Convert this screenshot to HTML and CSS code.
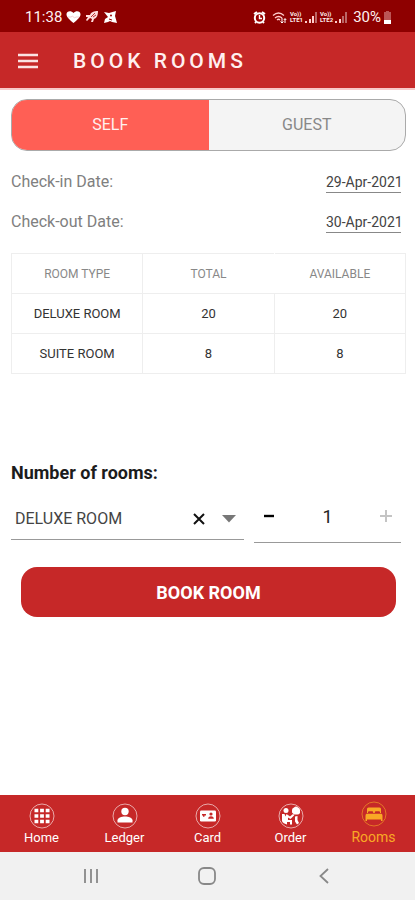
FILE: index.html
```html
<!DOCTYPE html>
<html lang="en">
<head>
<meta charset="utf-8">
<meta name="viewport" content="width=device-width, initial-scale=1">
<title>Book Rooms</title>
<link rel="stylesheet" href="styles.css">
</head>
<body>
<div class="status">
  <div class="status-group">
    <span class="clock">11:38</span>
    <svg width="15" height="14" viewBox="0 0 15 14" aria-hidden="true"><path fill="#fff" d="M7.500 13C3 9.500.5 7 .5 4.300.5 1 5 .2 7.500 3 10 .2 14.500 1 14.500 4.300 14.500 7 12 9.500 7.500 13z"/><path d="M2 7h3l1.500-1 2 2 1.500-1h3" fill="none" stroke="#ebb" stroke-width=".7"/></svg>
    <svg width="14" height="14" viewBox="0 0 14 14" aria-hidden="true"><path fill="#fdd" d="M5 5C6 2 9 1 13 1c0 4-1 7-4 8L8 12H6l1-3-2-1-3 3-1-1 2-3H1V5z"/><path d="M6 7l4-4M8 7l3-2" stroke="#b33" stroke-width="1"/></svg>
    <svg width="14" height="14" viewBox="0 0 14 14" aria-hidden="true"><path fill="#fff" d="M1 2l5 1 7-2-1 5 2 7-5-1-2-1-2 1-4 1 1-4 3-2z"/><circle cx="8" cy="5.500" r="1" fill="#900"/><path d="M6 9l3 1" stroke="#900"/></svg>
  </div>
  <div class="status-group status-right">
    <svg width="13" height="13" viewBox="0 0 13 13" aria-hidden="true"><path d="M1 3l3-2M12 3L9 1M3 11l-1 1M10 11l1 1" stroke="#fff" stroke-width="2"/><circle cx="6.500" cy="7" r="4.700" fill="#900" stroke="#fff" stroke-width="2"/><path d="M6.500 4v3.500H9" fill="none" stroke="#fff" stroke-width="1.400"/></svg>
    <svg class="wifi" width="15" height="13" viewBox="0 0 15 13" aria-hidden="true"><path d="M1 4.500q5.500-5 11 0M3 7q3.500-3 7 0M5 9q1.500-1.500 3 0" fill="none" stroke="#fcc" stroke-width="1.300"/><path d="M10 7v5M8.500 10.500L10 12l1.500-1.500M13 12V8M11.800 9L13 7.500 14.200 9" fill="none" stroke="#fff"/></svg>
    <span class="lte"><span>Vo))</span><span>LTE1</span></span>
    <svg width="13" height="12" viewBox="0 0 13 12" aria-hidden="true"><path fill="#fcc" d="M0 10h2v2H0zM4 8h2v4H4zM7 5h2v7H7z"/><path fill="#b66" d="M10 1h2v11h-2z"/></svg>
    <span class="lte"><span>Vo))</span><span>LTE2</span></span>
    <svg width="13" height="12" viewBox="0 0 13 12" aria-hidden="true"><path fill="#fcc" d="M0 10h2v2H0zM4 8h2v4H4z"/><path fill="#b66" d="M7 5h2v7H7zM10 1h2v11h-2z"/></svg>
    <span class="battery">30%</span>
    <svg width="9" height="13" viewBox="0 0 9 13" aria-hidden="true"><path fill="#b55" d="M3 0h3v1h2v8H1V1h2z"/><path fill="#fff" d="M1 9h7v4H1z"/></svg>
  </div>
</div>
<header class="appbar">
  <button class="menu" type="button" aria-label="Menu"><svg width="20" height="16" viewBox="0 0 20 16"><path d="M0 2h20M0 8h20M0 14h20" stroke="#fbe3e3" stroke-width="2.400"/></svg></button>
  <h1>BOOK ROOMS</h1>
</header>
<main>
  <div class="toggle">
    <button type="button" class="on" aria-pressed="true">SELF</button>
    <button type="button" aria-pressed="false">GUEST</button>
  </div>
  <div class="dates">
    <div class="date-row"><label for="in">Check-in Date:</label><input id="in" type="text" value="29-Apr-2021"></div>
    <div class="date-row"><label for="out">Check-out Date:</label><input id="out" type="text" value="30-Apr-2021"></div>
  </div>
  <table>
    <thead><tr><th>ROOM TYPE</th><th>TOTAL</th><th>AVAILABLE</th></tr></thead>
    <tbody>
      <tr><td>DELUXE ROOM</td><td>20</td><td>20</td></tr>
      <tr><td>SUITE ROOM</td><td>8</td><td>8</td></tr>
    </tbody>
  </table>
  <label class="rooms-label" for="type">Number of rooms:</label>
  <div class="picker">
    <div class="select">
      <select id="type"><option>DELUXE ROOM</option><option>SUITE ROOM</option></select>
      <button type="button" aria-label="Clear"><svg width="12" height="12" viewBox="0 0 12 12"><path d="M1 1l10 10M11 1L1 11" stroke="#111" stroke-width="2"/></svg></button>
      <svg class="caret" width="16" height="8" viewBox="0 0 16 8" aria-hidden="true"><path d="M1 0h14L8 7.500z" fill="#777"/></svg>
    </div>
    <div class="stepper">
      <button type="button" aria-label="Fewer rooms"><svg width="12" height="12" viewBox="0 0 12 12"><path d="M1 6h10" stroke="#000" stroke-width="2.400"/></svg></button>
      <input type="text" value="1" aria-label="Room count">
      <button type="button" aria-label="More rooms"><svg width="12" height="12" viewBox="0 0 12 12"><path d="M0 6h12M6 0v12" stroke="#c4c4c4" stroke-width="2"/></svg></button>
    </div>
  </div>
  <button class="book" type="button">BOOK ROOM</button>
</main>
<nav class="tabs">
  <a href="#home"><svg width="26" height="26" viewBox="0 0 26 26"><circle class="ring" cx="13" cy="13" r="12"/><path d="M5.500 7.500h15M5.500 13h15M5.500 18.500h15" fill="none" stroke="currentColor" stroke-width="3.500" stroke-dasharray="3.800 1.800"/></svg>Home</a>
  <a href="#ledger"><svg width="26" height="26" viewBox="0 0 26 26"><circle class="ring" cx="13" cy="13" r="12"/><circle cx="13" cy="8.500" r="3.700" fill="currentColor"/><path d="M5.500 19.500v-2.200c0-2.200 4-3.700 7.500-3.700s7.500 1.500 7.500 3.700v2.200z" fill="currentColor"/></svg>Ledger</a>
  <a href="#card"><svg width="26" height="26" viewBox="0 0 26 26"><circle class="ring" cx="13" cy="13" r="12"/><rect x="5" y="7.500" width="16" height="11" rx="1.200" fill="currentColor"/><circle cx="16" cy="11" r="1.600" fill="#c62828"/><path d="M13.200 15.800q0-2.500 2.800-2.500t2.800 2.500zM7 11h4v1.600H9.500v1.200H8v-1.200H7z" fill="#c62828"/></svg>Card</a>
  <a href="#order"><svg width="26" height="26" viewBox="0 0 26 26"><circle class="ring" cx="13" cy="13" r="12"/><g fill="currentColor"><circle cx="8" cy="7.500" r="2.500"/><path d="M4 11h2.500l1 2.500 1-2.500 3.500 2.500 3-2.500 1.300 1.300L12.500 16 10 14.500V17h4v4.500h-2V19H9v2.500Q4.500 20 4 18zM14 7q0-2 2-2.500 2-2 4 0 2 .5 2 2.500v3q-1 1.500-2.500 1.500H16l-2-2z"/><path d="M17 13.500l2.500-.5v4l1.500 3-2 1.500-2-3z"/></g></svg>Order</a>
  <a href="#rooms" class="active" aria-current="page"><svg width="26" height="26" viewBox="0 0 26 26"><circle class="ring" cx="13" cy="13" r="12"/><path fill="currentColor" d="M6 12V8q0-1.500 1.500-1.500h11Q20 6.500 20 8v4h-1v-.8q0-1-1-1h-3.200q-1 0-1 1v.8h-1.600v-.8q0-1-1-1H8q-1 0-1 1v.8zM5.500 12.800h15q1 .5 1 2V20H20v-1.500H6V20H4.500v-5.200q0-1.500 1-2z"/></svg>Rooms</a>
</nav>
<div class="sysnav">
  <button type="button" aria-label="Recent apps"><svg width="16" height="16" viewBox="0 0 16 16"><path d="M2 1v14M8 1v14M14 1v14" stroke="#888" stroke-width="1.800"/></svg></button>
  <button type="button" aria-label="Home screen"><svg width="18" height="18" viewBox="0 0 18 18"><rect x="1" y="1" width="16" height="16" rx="5" fill="none" stroke="#888" stroke-width="1.800"/></svg></button>
  <button type="button" aria-label="Back"><svg width="16" height="16" viewBox="0 0 16 16"><path d="M12 1L4.500 8l7.500 7" fill="none" stroke="#888" stroke-width="1.800"/></svg></button>
</div>
</body>
</html>
```
FILE: styles.css
```css
* { box-sizing: border-box; }
body {
  margin: 0;
  min-height: 100vh;
  display: flex;
  flex-direction: column;
  background: #fff;
  font-family: Roboto, sans-serif;
  color: #333;
}
button, input, select {
  font: inherit;
  color: inherit;
  background: none;
  border: 0;
  padding: 0;
  margin: 0;
  border-radius: 0;
}
svg { display: block; flex: none; }

.status {
  height: 32px;
  padding: 2px 23px 0 25px;
  display: flex;
  justify-content: space-between;
  align-items: center;
  background: #8e0000;
  color: #fff0f0;
  font-size: 15px;
}
.status-group { display: flex; align-items: center; gap: 4px; }
.status-right { gap: 2px; }
.wifi { margin: 0 1px 0 4px; }
.lte { display: flex; flex-direction: column; font-size: 6px; line-height: 6px; font-weight: 700; }
.battery { margin-left: 3px; }

.appbar {
  height: 58px;
  padding: 2px 18px 0;
  display: flex;
  align-items: center;
  gap: 35px;
  background: #c62828;
  border-bottom: 2px solid #f8c9c9;
}
.menu { width: 20px; }
h1 {
  margin: 0;
  font-size: 21px;
  font-weight: 500;
  letter-spacing: 4px;
  color: #fff0f0;
}

main { flex: 1; padding: 9px 9px 0 11px; }
.toggle {
  height: 52px;
  display: flex;
  border: 1px solid #aaa;
  border-radius: 16px;
  overflow: hidden;
  background: #f4f4f4;
}
.toggle button { flex: 1; padding-bottom: 2px; font-size: 16px; color: #888; }
.toggle .on { background: #ff5f55; color: #fff0ee; }

.dates { padding: 10px 5px 12px 0; }
.date-row {
  height: 40px;
  display: flex;
  align-items: center;
  justify-content: space-between;
  font-size: 16px;
  color: #808080;
}
.date-row input {
  width: 75px;
  height: 22px;
  margin-top: 2px;
  border-bottom: 1px solid #888;
  font-size: 14px;
  color: #444;
}

table {
  width: 100%;
  table-layout: fixed;
  border-collapse: collapse;
  font-size: 13px;
  text-align: center;
}
th, td { height: 40px; padding: 0; border: 1px solid #eee; }
th { font-size: 12px; font-weight: 400; color: #888; }
thead th:nth-child(2) { border-right-color: #fff; }

.rooms-label {
  display: block;
  margin-top: 87px;
  font-size: 18px;
  line-height: 24px;
  font-weight: 700;
  color: #1c1c1c;
}
.picker {
  display: grid;
  grid-template-columns: 233fr 147fr;
  align-items: start;
  gap: 10px;
  margin: 13px 5px 0 0;
}
.select {
  height: 42px;
  padding: 0 7px 0 4px;
  display: flex;
  align-items: center;
  gap: 16px;
  border-bottom: 1px solid #999;
}
.select select { flex: 1; min-width: 0; appearance: none; font-size: 16px; color: #444; }
.stepper {
  height: 45px;
  padding: 0 9px 8px;
  display: flex;
  align-items: center;
  justify-content: space-between;
  border-bottom: 1px solid #999;
}
.stepper input { width: 40px; text-align: center; font-size: 18px; color: #222; }
.book {
  display: block;
  width: calc(100% - 20px);
  height: 50px;
  margin: 24px 10px 0;
  border-radius: 16px;
  background: #c62828;
  color: #fff;
  font-size: 18px;
  font-weight: 700;
}

.tabs { height: 57px; display: flex; background: #c62828; }
.tabs a {
  flex: 1;
  display: flex;
  flex-direction: column;
  align-items: center;
  padding-top: 8px;
  gap: 1px;
  font-size: 13px;
  line-height: 16px;
  color: #fff;
  text-decoration: none;
}
.tabs .active { padding-top: 6px; gap: 2px; font-size: 14px; color: #f9a825; }
.ring { fill: none; stroke: currentColor; stroke-width: .6; }

.sysnav {
  height: 48px;
  padding: 0 33px;
  display: flex;
  align-items: center;
  justify-content: space-around;
  background: #f1f1f1;
}
```
